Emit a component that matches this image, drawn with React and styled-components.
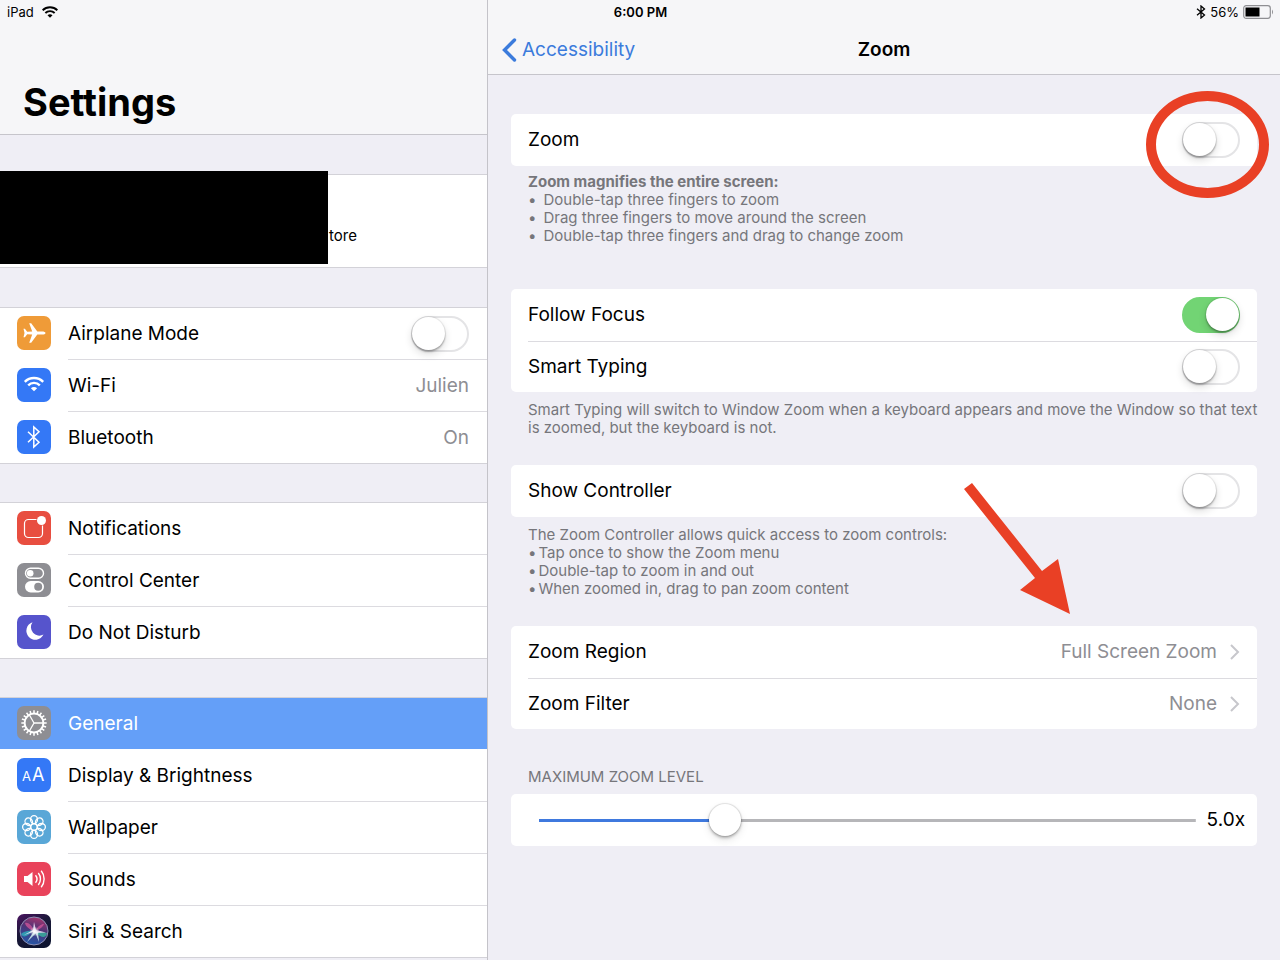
import React, { useState } from "react";
import styled, { createGlobalStyle, css } from "styled-components";

const GlobalStyle = createGlobalStyle`
  *, *::before, *::after { box-sizing: border-box; }
  body {
    margin: 0;
    background: #efeef5;
    color: #000;
    font-family: Inter, "Liberation Sans", sans-serif;
    font-size: 19px;
    line-height: 24px;
  }
  h1, h2, p, ul { margin: 0; padding: 0; }
  button, input { font: inherit; color: inherit; margin: 0; }
`;

const Page = styled.div`
  position: relative;
  display: flex;
  height: 100vh;
`;

const StatusBar = styled.div`
  position: absolute;
  inset: 0 0 auto 0;
  display: grid;
  grid-template-columns: 1fr auto 1fr;
  align-items: center;
  height: 24px;
  padding: 0 6px 0 7px;
  font-size: 13px;
  line-height: 16px;
`;

const StatusGroup = styled.div`
  display: flex;
  align-items: center;
  gap: ${(p) => p.$gap};
  justify-content: ${(p) => (p.$end ? "flex-end" : "flex-start")};
`;

const Clock = styled.time`
  font-weight: 600;
`;

const Sidebar = styled.aside`
  flex: 0 0 488px;
  overflow: hidden auto;
  border-right: 1px solid #c4c3c9;
`;

const SidebarHeader = styled.header`
  display: flex;
  align-items: flex-end;
  height: 135px;
  padding: 0 23px 8px;
  background: #f6f6f8;
  border-bottom: 1px solid #c6c5cb;
`;

const LargeTitle = styled.h1`
  font-size: 38px;
  line-height: 48px;
  font-weight: 700;
`;

const Groups = styled.nav`
  display: flex;
  flex-direction: column;
  gap: 38px;
  padding-top: 39px;
`;

const Account = styled.a`
  position: relative;
  display: flex;
  align-items: center;
  height: 94px;
  margin-bottom: 1px;
  padding: 30px 0 0 329px;
  background: #fff;
  border: solid #d3d2d8;
  border-width: 1px 0;
  color: inherit;
  text-decoration: none;
  font-size: 15px;
`;

const Redaction = styled.span`
  position: absolute;
  left: 0;
  top: -4px;
  width: 328px;
  height: 93px;
  background: #000;
`;

const navRow = css`
  display: flex;
  align-items: flex-end;
  gap: 17px;
  height: 52px;
  padding-left: 17px;
  color: ${(p) => (p.$active ? "#fff" : "#000")};
  background: ${(p) => (p.$active ? "#649ff8" : "#fff")};
  text-decoration: none;
`;
const NavLink = styled.a`${navRow}`;
const NavLabel = styled.label`${navRow}`;

const NavBody = styled.span`
  display: flex;
  flex: 1;
  align-self: stretch;
  align-items: center;
  justify-content: space-between;
  padding-right: 18px;
  border-top: 1px solid ${(p) => (p.$plain ? "transparent" : "#dcdbe0")};
`;

const Group = styled.div`
  background: #fff;
  border: solid #d3d2d8;
  border-width: 1px 0;
  & > :first-child { height: 51px; }
  & > :first-child ${NavBody} { border-top: 0; }
`;

const Value = styled.span`
  color: #8e8e93;
`;

const Tile = styled.svg`
  flex: none;
  display: block;
  width: 34px;
  height: 34px;
  margin-bottom: 9px;
`;

const Switch = styled.input.attrs({ type: "checkbox", role: "switch" })`
  appearance: none;
  flex: none;
  position: relative;
  width: 58px;
  height: 36px;
  border-radius: 18px;
  border: 2px solid #e4e4e6;
  background: #fff;
  &::before {
    content: "";
    position: absolute;
    left: -1px;
    top: -1px;
    width: 33px;
    height: 33px;
    border-radius: 50%;
    background: #fff;
    box-shadow: 0 0 1px 1px rgba(0, 0, 0, 0.08), 0 2px 2px rgba(0, 0, 0, 0.24), 0 4px 8px rgba(0, 0, 0, 0.14);
  }
  &:checked {
    background: #72d474;
    border-color: #72d474;
  }
  &:checked::before { left: 22px; }
`;

const Detail = styled.main`
  flex: 1;
  min-width: 0;
  overflow: hidden auto;
`;

const DetailHeader = styled.header`
  display: grid;
  grid-template-columns: 1fr auto 1fr;
  align-items: center;
  height: 75px;
  padding: 25px 14px 0;
  background: #f6f6f8;
  border-bottom: 1px solid #c6c5cb;
`;

const BackLink = styled.a`
  display: flex;
  align-items: center;
  gap: 4px;
  color: #3b7bdc;
  text-decoration: none;
`;

const Title = styled.h2`
  font-size: 19px;
  font-weight: 600;
`;

const Content = styled.div`
  padding: 39px 23px;
`;

const Card = styled.section`
  position: relative;
  background: #fff;
  border-radius: 5px;
`;

const cardRow = css`
  display: flex;
  align-items: center;
  justify-content: space-between;
  height: 52px;
  margin-left: 17px;
  padding-right: 17px;
  color: inherit;
  text-decoration: none;
  & + & {
    height: 51px;
    border-top: 1px solid #dcdbe0;
  }
`;
const CardLabel = styled.label`${cardRow}`;
const CardLink = styled.a`${cardRow}`;

const Disclosure = styled.span`
  display: flex;
  align-items: center;
  gap: 13px;
  color: #8e8e93;
`;

const Caption = styled.div`
  padding: ${(p) => (p.$loose ? "7px 0 44px" : "9px 0 28px")};
  margin: 0 -4px 0 17px;
  color: #76767b;
  font-size: 15px;
  line-height: 18px;
`;

const Bullets = styled.ul`
  list-style: none;
  li { display: flex; gap: ${(p) => p.$gap}; }
  li::before { content: "•"; }
`;

const SectionLabel = styled.label`
  display: block;
  padding: 39px 17px 8px;
  color: #76767b;
  font-size: 15px;
  line-height: 18px;
`;

const SliderRow = styled.div`
  display: flex;
  align-items: center;
  gap: 11px;
  height: 52px;
  padding: 0 12px 0 28px;
`;

const Slider = styled.input.attrs({ type: "range" })`
  appearance: none;
  flex: 1;
  min-width: 0;
  height: 34px;
  background: linear-gradient(to right, #3f79de ${(p) => p.$fill}, #b6b6b9 ${(p) => p.$fill}) center / 100% 3px no-repeat;
  &::-webkit-slider-thumb {
    appearance: none;
    width: 32px;
    height: 32px;
    border-radius: 50%;
    background: #fff;
    box-shadow: 0 0 1px 1px rgba(0, 0, 0, 0.1), 0 2px 3px rgba(0, 0, 0, 0.25), 0 4px 8px rgba(0, 0, 0, 0.1);
  }
`;

const Ring = styled.span`
  position: absolute;
  right: -12px;
  top: -23px;
  width: 123px;
  height: 107px;
  border: 10px solid #e94025;
  border-radius: 50%;
  pointer-events: none;
`;

const Arrow = styled.svg`
  position: absolute;
  right: 187px;
  top: -143px;
  pointer-events: none;
`;

const Icon = ({ bg, children }) => (
  <Tile viewBox="0 0 34 34" aria-hidden="true">
    <rect width="34" height="34" rx="7" fill={bg} />
    {children}
  </Tile>
);

const WifiShape = ({ color }) => (
  <g fill="none" stroke={color} strokeWidth="2.4">
    <path d="M0.800 5.300a13 13 0 0 1 18.400 0" />
    <path d="M4.200 8.800a8.200 8.200 0 0 1 11.600 0" />
    <path d="M10 14.800 6.900 11.700a4.400 4.400 0 0 1 6.200 0z" fill={color} stroke="none" />
  </g>
);

const airplane = (
  <Icon bg="#ef9b38">
    <path fill="#fff" d="M28.500 17c0-1-1.700-1.500-3.200-1.500h-5L14.200 7.200h-2l3 8.200-5 .3-2.300-2.900H6.500l1 4.200-1 4.200h1.400l2.300-2.900 5 .3-3 8.200h2l6.100-8.200h5c1.500 0 3.200-.5 3.200-1.600z" />
  </Icon>
);
const wifi = (
  <Icon bg="#3478f6">
    <g transform="translate(7 8.500)"><WifiShape color="#fff" /></g>
  </Icon>
);
const bluetooth = (
  <Icon bg="#3478f6">
    <path fill="none" stroke="#fff" strokeWidth="1.500" d="M11 11.800 22 22.200 16.800 27V7L22 11.800 11 22.200" />
  </Icon>
);
const notifications = (
  <Icon bg="#e84e40">
    <path fill="none" stroke="#fff" strokeWidth="1.200" d="M19.500 8.500H11.500a4 4 0 0 0-4 4v10a4 4 0 0 0 4 4h10a4 4 0 0 0 4-4v-8" />
    <circle cx="24.500" cy="9.500" r="4.500" fill="#fff" />
  </Icon>
);
const controlCenter = (
  <Icon bg="#8e8e93">
    <rect x="8.500" y="5.200" width="18" height="10" rx="5" fill="none" stroke="#fff" strokeWidth="1.400" />
    <circle cx="13.200" cy="10.200" r="3.300" fill="#fff" />
    <rect x="8" y="18" width="19" height="11.400" rx="5.700" fill="#fff" />
    <circle cx="21.200" cy="23.700" r="4" fill="#8e8e93" />
  </Icon>
);
const moon = (
  <Icon bg="#5654cc">
    <path fill="#fff" d="M15.500 7.200a9 9 0 1 0 11 12.400 8.500 8.500 0 0 1-11-12.400z" />
  </Icon>
);
const TEETH = Array.from({ length: 20 }, (_, i) => i * 18);
const gear = (
  <Icon bg="#8e8e93">
    <g fill="none" stroke="#fff">
      <circle cx="17" cy="17" r="9.400" strokeWidth="2" />
      {TEETH.map((a) => (
        <path key={a} strokeWidth="1.500" d="M17 7.500V4.300" transform={`rotate(${a} 17 17)`} />
      ))}
      <path strokeWidth="1.300" d="M17 17h9M17 17l-4.600-8M17 17l-4.600 8" />
    </g>
  </Icon>
);
const display = (
  <Icon bg="#3478f6">
    <g fill="#fff" fontFamily="Inter, sans-serif">
      <text x="5" y="23" fontSize="13">A</text>
      <text x="15" y="23" fontSize="18">A</text>
    </g>
  </Icon>
);
const wallpaper = (
  <Icon bg="#59a7d7">
    <g fill="none" stroke="#fff" strokeWidth="1.300">
      {[0, 45, 90, 135, 180, 225, 270, 315].map((a) => (
        <ellipse key={a} cx="17" cy="9.600" rx="3.500" ry="4" transform={`rotate(${a} 17 17)`} />
      ))}
      <circle cx="17" cy="17" r="3.200" />
    </g>
  </Icon>
);
const sounds = (
  <Icon bg="#e9435b">
    <path fill="#fff" d="M7 14h3.500l5-4v14l-5-4H7z" />
    <g fill="none" stroke="#fff" strokeWidth="1.400">
      <path d="M18.500 13.200a6 6 0 0 1 0 7.600" />
      <path d="M21.300 11a9.500 9.500 0 0 1 0 12" />
      <path d="M24.200 8.800a13 13 0 0 1 0 16.400" />
    </g>
  </Icon>
);
const siri = (
  <Tile viewBox="0 0 34 34" aria-hidden="true">
    <defs>
      <linearGradient id="siriTile" x1="0" y1="0" x2="0.600" y2="1">
        <stop offset="0" stopColor="#4a1460" />
        <stop offset="0.500" stopColor="#1a1838" />
        <stop offset="1" stopColor="#0d1430" />
      </linearGradient>
      <linearGradient id="siriOrb" x1="0.700" y1="0" x2="0.400" y2="1">
        <stop offset="0" stopColor="#a8346c" />
        <stop offset="0.450" stopColor="#4c3478" />
        <stop offset="1" stopColor="#2458a8" />
      </linearGradient>
      <radialGradient id="siriCore">
        <stop offset="0" stopColor="#fff" />
        <stop offset="1" stopColor="#fff" stopOpacity="0" />
      </radialGradient>
    </defs>
    <rect width="34" height="34" rx="7" fill="url(#siriTile)" />
    <circle cx="17" cy="17" r="14" fill="url(#siriOrb)" stroke="#8d8fb5" strokeWidth="1" />
    <path fill="#2fb5bd" d="M16 17C11 16 6 18 4 20c2 4 6 3 12-3z" opacity=".75" />
    <path fill="#37bda0" d="M18 18c5 0 9 0 12 1-1 5-5 6-12-1z" opacity=".75" />
    <path fill="#d9589c" d="M17 17C15 11 11 8 8 9c1 4 4 6 9 8zM18 17c3-5 6-7 9-7-1 3-4 5-9 7z" opacity=".7" />
    <path fill="#d6f7f2" d="M17 17 10 28l9-9zM18 18l4 10-1-10z" opacity=".85" />
    <path fill="#f3e6fa" d="m16 18-9 3 9-5 1-8 2 8 10 2.500-10 .5z" opacity=".85" />
    <circle cx="17.500" cy="17.500" r="5" fill="url(#siriCore)" />
  </Tile>
);

const BluetoothGlyph = () => (
  <svg width="10" height="14" viewBox="0 0 10 14" aria-hidden="true">
    <path fill="none" stroke="#000" strokeWidth="1.300" d="M1 3.800 8.500 10 5 13V1l3.500 3L1 10.200" />
  </svg>
);

const Battery = () => (
  <svg width="31" height="14" viewBox="0 0 31 14" aria-hidden="true">
    <rect x="0.700" y="0.700" width="26.600" height="12.600" rx="2.500" fill="none" stroke="#8f8f93" strokeWidth="1.200" />
    <rect x="2.500" y="2.500" width="14" height="9" fill="#000" />
    <path fill="#8f8f93" d="M29 4.500q2 2.500 0 5z" />
  </svg>
);

const Chevron = () => (
  <svg width="10" height="16" viewBox="0 0 10 16" aria-hidden="true">
    <path fill="none" stroke="#c7c7cc" strokeWidth="2" d="m1 1 7 7-7 7" />
  </svg>
);

function NavItem({ icon, label, value, active, plain }) {
  return (
    <NavLink href="#" $active={active} aria-current={active ? "page" : undefined}>
      {icon}
      <NavBody $plain={plain}>
        {label}
        {value && <Value>{value}</Value>}
      </NavBody>
    </NavLink>
  );
}

function SwitchRow({ label, on }) {
  return (
    <CardLabel>
      {label}
      <Switch defaultChecked={on} />
    </CardLabel>
  );
}

function LinkRow({ label, value }) {
  return (
    <CardLink href="#">
      {label}
      <Disclosure>{value}<Chevron /></Disclosure>
    </CardLink>
  );
}

const MIN_ZOOM = 1.25;
const MAX_ZOOM = 15;

export default function App() {
  const [level, setLevel] = useState(5);
  const ratio = (level - MIN_ZOOM) / (MAX_ZOOM - MIN_ZOOM);
  return (
    <>
      <GlobalStyle />
      <Page>
        <Sidebar>
          <SidebarHeader><LargeTitle>Settings</LargeTitle></SidebarHeader>
          <Groups aria-label="Settings">
            <Account href="#">tore<Redaction /></Account>
            <Group>
              <NavLabel>
                {airplane}
                <NavBody>Airplane Mode<Switch /></NavBody>
              </NavLabel>
              <NavItem icon={wifi} label="Wi-Fi" value="Julien" />
              <NavItem icon={bluetooth} label="Bluetooth" value="On" />
            </Group>
            <Group>
              <NavItem icon={notifications} label="Notifications" />
              <NavItem icon={controlCenter} label="Control Center" />
              <NavItem icon={moon} label="Do Not Disturb" />
            </Group>
            <Group>
              <NavItem icon={gear} label="General" active />
              <NavItem icon={display} label="Display &amp; Brightness" plain />
              <NavItem icon={wallpaper} label="Wallpaper" />
              <NavItem icon={sounds} label="Sounds" />
              <NavItem icon={siri} label="Siri &amp; Search" />
            </Group>
          </Groups>
        </Sidebar>

        <Detail>
          <DetailHeader>
            <BackLink href="#">
              <svg width="16" height="24" viewBox="0 0 16 24" aria-hidden="true">
                <path fill="none" stroke="#3b7bdc" strokeWidth="3.400" strokeLinecap="round" d="M12.500 2 2.500 12l10 10" />
              </svg>
              Accessibility
            </BackLink>
            <Title>Zoom</Title>
          </DetailHeader>
          <Content>
            <Card>
              <SwitchRow label="Zoom" />
              <Ring />
            </Card>
            <Caption $loose>
              <strong>Zoom magnifies the entire screen:</strong>
              <Bullets $gap="7px">
                <li>Double-tap three fingers to zoom</li>
                <li>Drag three fingers to move around the screen</li>
                <li>Double-tap three fingers and drag to change zoom</li>
              </Bullets>
            </Caption>

            <Card>
              <SwitchRow label="Follow Focus" on />
              <SwitchRow label="Smart Typing" />
            </Card>
            <Caption as="p">
              Smart Typing will switch to Window Zoom when a keyboard appears and move the Window so that text is zoomed, but the keyboard is not.
            </Caption>

            <Card><SwitchRow label="Show Controller" /></Card>
            <Caption>
              The Zoom Controller allows quick access to zoom controls:
              <Bullets $gap="2px">
                <li>Tap once to show the Zoom menu</li>
                <li>Double-tap to zoom in and out</li>
                <li>When zoomed in, drag to pan zoom content</li>
              </Bullets>
            </Caption>

            <Card>
              <LinkRow label="Zoom Region" value="Full Screen Zoom" />
              <LinkRow label="Zoom Filter" value="None" />
              <Arrow width="107" height="132" viewBox="0 0 107 132" aria-hidden="true">
                <path fill="#e94025" d="m1 6 8-6 70 88 16-12 12 55-50-24 15-12z" />
              </Arrow>
            </Card>

            <SectionLabel htmlFor="zoom-level">MAXIMUM ZOOM LEVEL</SectionLabel>
            <Card>
              <SliderRow>
                <Slider
                  id="zoom-level"
                  min={MIN_ZOOM}
                  max={MAX_ZOOM}
                  step="0.05"
                  value={level}
                  $fill={`${Math.round(ratio * 100)}%`}
                  onChange={(e) => setLevel(Number(e.target.value))}
                />
                <output htmlFor="zoom-level">{level.toFixed(1)}x</output>
              </SliderRow>
            </Card>
          </Content>
        </Detail>

        <StatusBar>
          <StatusGroup $gap="8px">
            iPad
            <svg width="16" height="12" viewBox="0 0 20 15" aria-hidden="true"><WifiShape color="#000" /></svg>
          </StatusGroup>
          <Clock>6:00 PM</Clock>
          <StatusGroup $gap="4px" $end><BluetoothGlyph />56%<Battery /></StatusGroup>
        </StatusBar>
      </Page>
    </>
  );
}
